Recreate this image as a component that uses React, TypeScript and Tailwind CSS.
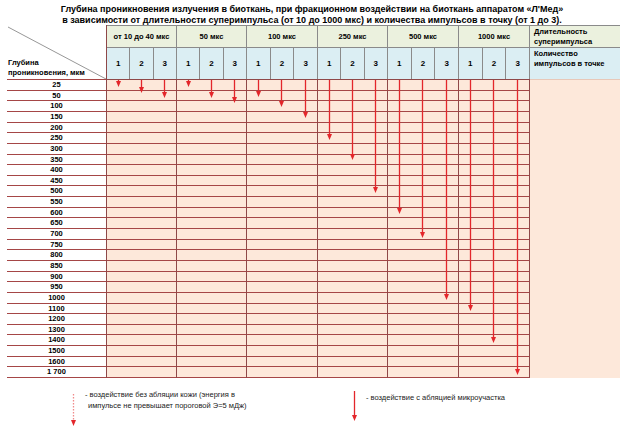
const depths = [
  "25", "50", "100", "150", "200", "250", "300", "350", "400", "450",
  "500", "550", "600", "650", "700", "750", "800", "850", "900", "950",
  "1000", "1100", "1200", "1300", "1400", "1500", "1600", "1 700",
];

interface Group {
  label: string;
  width: string;
  tips: number[]; // y where arrow tip ends (page coords)
}

const groups: Group[] = [
  { label: "от 10 до 40 мкс", width: "w-[71px] border-l", tips: [87, 93, 98] },
  { label: "50 мкс", width: "w-[70px]", tips: [87, 98, 103] },
  { label: "100 мкс", width: "w-[71px]", tips: [97, 107, 118] },
  { label: "250 мкс", width: "w-[70px]", tips: [140, 160, 193] },
  { label: "500 мкс", width: "w-[71px]", tips: [214, 238, 300] },
  { label: "1000 мкс", width: "w-[71px]", tips: [311, 343, 375] },
];

const BODY_TOP = 80;

const Arrow = ({ len, dashed }: { len: number; dashed?: boolean }) => (
  <svg width="7" height={len} className="block">
    <line
      x1="3.5"
      y1="0"
      x2="3.5"
      y2={len - 4}
      stroke={dashed ? "#f08a8a" : "#e3262b"}
      strokeWidth="1.3"
      strokeDasharray={dashed ? "1.5 1.5" : undefined}
    />
    <polygon points={`1,${len - 6} 6,${len - 6} 3.5,${len}`} fill="#e3262b" />
  </svg>
);

const Rows = ({ children }: { children?: (d: string) => React.ReactNode }) => (
  <div className="grid grid-rows-[repeat(28,minmax(0,1fr))] h-[298px]">
    {depths.map((d) => (
      <div key={d} className="border-b border-[#a54646] flex items-center justify-center">
        {children ? children(d) : null}
      </div>
    ))}
  </div>
);

export default function App() {
  return (
    <div className="w-[622px] h-[430px] bg-white overflow-hidden font-['Liberation_Sans',Arial,sans-serif] text-black">
      <div className="pt-[4px] pl-[2px] text-center font-bold text-[9px] leading-[10.5px]">
        <div>Глубина проникновения излучения в биоткань, при фракционном воздействии на биоткань аппаратом «Л'Мед»</div>
        <div>в зависимости от длительности суперимпульса (от 10 до 1000 мкс) и количества импульсов в точку (от 1 до 3).</div>
      </div>

      <div className="flex ml-[7px]">
        {/* depth column */}
        <div className="w-[99px] flex flex-col">
          <div className="relative h-[54px]">
            <svg width="99" height="54" className="absolute inset-0">
              <line x1="1" y1="2" x2="99" y2="54" stroke="#7c7c7c" strokeWidth="0.8" />
            </svg>
            <div className="absolute left-[1px] bottom-[1px] font-bold text-[7.5px] leading-[10px]">
              <div>Глубина</div>
              <div>проникновения, мкм</div>
            </div>
          </div>
          <div className="border-t border-[#a54646] bg-white">
            <Rows>{(d) => <span className="font-bold text-[7.5px] leading-none">{d}</span>}</Rows>
          </div>
        </div>

        {/* duration groups */}
        {groups.map((g) => (
          <div key={g.label} className={`${g.width} flex flex-col border-[#8f4848]`}>
            <div className="h-[22px] bg-[#ebf1de] border-t border-r border-[#8a8a8a] flex items-center justify-center font-bold text-[7.5px]">
              {g.label}
            </div>
            <div className="h-[32px] bg-[#dbeef3] border-t border-r border-[#8a8a8a] flex">
              {[1, 2, 3].map((n) => (
                <div
                  key={n}
                  className="flex-1 flex items-center justify-center font-bold text-[8px] border-r border-[#8a8a8a] last:border-r-0"
                >
                  {n}
                </div>
              ))}
            </div>
            <div className="relative bg-[#fde8da] border-t border-r border-[#8f4848]">
              <Rows />
              <div className="absolute inset-0 flex">
                {g.tips.map((t, i) => (
                  <div key={i} className="flex-1 flex justify-center">
                    <Arrow len={t - BODY_TOP} />
                  </div>
                ))}
              </div>
            </div>
          </div>
        ))}

        {/* right column */}
        <div className="w-[90px] flex flex-col">
          <div className="h-[22px] bg-[#ebf1de] border-t border-[#8a8a8a] pl-[4px] pt-[1px] font-bold text-[7.5px] leading-[10px]">
            <div>Длительность</div>
            <div>суперимпульса</div>
          </div>
          <div className="h-[32px] bg-[#dbeef3] border-t border-[#8a8a8a] pl-[4px] pt-[1px] font-bold text-[7.5px] leading-[10px]">
            <div>Количество</div>
            <div>импульсов в точке</div>
          </div>
          <div className="h-[299px] bg-[#fde8da] border-t border-[#e8c8b8]" />
        </div>
      </div>

      {/* legend */}
      <div className="flex mt-[10px] text-[7.5px] leading-[11px] text-[#222]">
        <div className="ml-[70px] w-[7px] pt-[6px]">
          <Arrow len={32} dashed />
        </div>
        <div className="ml-[8px] mt-[1px] w-[266px]">
          <div>- воздействие без абляции кожи (энергия в</div>
          <div className="pl-[3px]">импульсе не превышает пороговой Э=5 мДж)</div>
        </div>
        <div className="w-[7px] pt-[3px]">
          <Arrow len={30} />
        </div>
        <div className="ml-[8px] mt-[4px]">- воздействие с абляцией микроучастка</div>
      </div>
    </div>
  );
}
